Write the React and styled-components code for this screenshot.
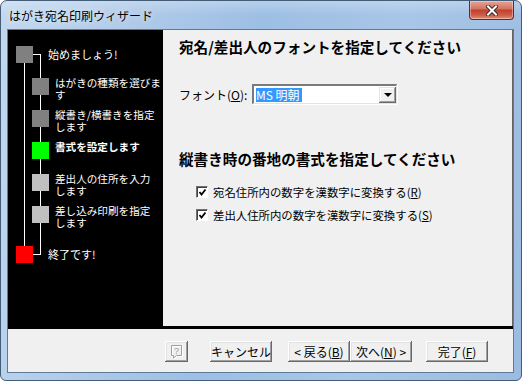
import React from "react";
import styled, { createGlobalStyle } from "styled-components";

const GlobalStyle = createGlobalStyle`
  html, body {
    margin: 0;
    padding: 0;
    background: #ffffff;
    overflow: hidden;
  }
  body {
    font-family: "Noto Sans CJK JP", "Noto Sans", sans-serif;
  }
`;

const steps = [
  { label: ["はがきの種類を選びま", "す"], color: "#808080" },
  { label: ["縦書き/横書きを指定", "します"], color: "#808080" },
  { label: ["書式を設定します"], color: "#00ff00", current: true },
  { label: ["差出人の住所を入力", "します"], color: "#c0c0c0" },
  { label: ["差し込み印刷を指定", "します"], color: "#c0c0c0" },
];

function CloseIcon() {
  return (
    <svg width="12" height="11" viewBox="0 0 12 11">
      <path d="M2 1.5 L10 9.5 M10 1.5 L2 9.5" stroke="#3a2a2a" strokeWidth="4" strokeLinecap="square" />
      <path d="M2 1.5 L10 9.5 M10 1.5 L2 9.5" stroke="#ffffff" strokeWidth="2" strokeLinecap="square" />
    </svg>
  );
}

function HelpIcon() {
  return (
    <svg width="13" height="15" viewBox="0 0 13 15">
      <path d="M1.5 1.5 H11.5 V11.5 H6.5 L3.5 14 V11.5 H1.5 Z" fill="none" stroke="#ffffff" transform="translate(1 1)" />
      <path d="M1.5 1.5 H11.5 V11.5 H6.5 L3.5 14 V11.5 H1.5 Z" fill="none" stroke="#a0a0a0" />
      <text x="6.5" y="10" fontSize="9" textAnchor="middle" fill="#a0a0a0" fontFamily="Liberation Sans, sans-serif">?</text>
    </svg>
  );
}

function CheckMark() {
  return (
    <svg width="9" height="9" viewBox="0 0 9 9">
      <path d="M1.5 4 L3.5 6.5 L7.5 1.5" fill="none" stroke="#000000" strokeWidth="1.8" />
    </svg>
  );
}

function TreeLines() {
  return (
    <Lines width="155" height="296" viewBox="0 0 155 296">
      <rect x="16" y="33" width="1" height="183" fill="#ffffff" />
      <rect x="32" y="24" width="1" height="201" fill="#ffffff" />
      <rect x="25" y="24" width="8" height="1" fill="#ffffff" />
      <rect x="25" y="224" width="8" height="1" fill="#ffffff" />
    </Lines>
  );
}

export default function App() {
  return (
    <>
      <GlobalStyle />
      <Window>
        <TitleBar>
          <Title>はがき宛名印刷ウィザード</Title>
          <CloseButton>
            <CloseIcon />
          </CloseButton>
        </TitleBar>
        <Client>
          <Upper>
            <StepPanel>
              <TreeLines />
              <TopStep>
                <Square $color="#808080" />
                <TopLabel>始めましょう!</TopLabel>
              </TopStep>
              {steps.map((s, i) => (
                <SubStep key={i} $last={i === steps.length - 1}>
                  <Square $color={s.color} />
                  <SubLabel $bold={s.current}>
                    {s.label.map((line, j) => (
                      <div key={j}>{line}</div>
                    ))}
                  </SubLabel>
                </SubStep>
              ))}
              <TopStep>
                <Square $color="#ff0000" />
                <TopLabel>終了です!</TopLabel>
              </TopStep>
            </StepPanel>
            <Content>
              <Heading>宛名/差出人のフォントを指定してください</Heading>
              <FontRow>
                <FieldLabel>
                  フォント(<U>O</U>):
                </FieldLabel>
                <Combo>
                  <ComboText>
                    <Selected>MS 明朝</Selected>
                    <Caret />
                  </ComboText>
                  <DropButton>
                    <Arrow />
                  </DropButton>
                </Combo>
              </FontRow>
              <Heading $top={46}>縦書き時の番地の書式を指定してください</Heading>
              <CheckList>
                <CheckRow>
                  <CheckBox>
                    <CheckMark />
                  </CheckBox>
                  <span>
                    宛名住所内の数字を漢数字に変換する(<U>R</U>)
                  </span>
                </CheckRow>
                <CheckRow>
                  <CheckBox>
                    <CheckMark />
                  </CheckBox>
                  <span>
                    差出人住所内の数字を漢数字に変換する(<U>S</U>)
                  </span>
                </CheckRow>
              </CheckList>
            </Content>
          </Upper>
          <ButtonBar>
            <HelpButton disabled>
              <HelpIcon />
            </HelpButton>
            <Button $gap={22}>キャンセル</Button>
            <Button $gap={16}>
              &lt; 戻る(<U>B</U>)
            </Button>
            <Button $gap={0}>
              次へ(<U>N</U>) &gt;
            </Button>
            <Button $gap={14}>
              完了(<U>F</U>)
            </Button>
          </ButtonBar>
        </Client>
      </Window>
    </>
  );
}

const Window = styled.div`
  box-sizing: border-box;
  width: 522px;
  height: 381px;
  display: flex;
  flex-direction: column;
  border: 1px solid #435d78;
  border-radius: 7px 7px 6px 6px;
  overflow: hidden;
  background:
    linear-gradient(180deg, rgba(255, 255, 255, 0.25) 0px, rgba(255, 255, 255, 0) 14px),
    linear-gradient(100deg, #c3d8ee 0%, #b4cdea 18%, #9dbfe4 45%, #a8c6e7 70%, #9cbbe0 100%);
`;

const TitleBar = styled.div`
  height: 28px;
  display: flex;
  align-items: flex-start;
  justify-content: space-between;
  padding: 0 7px 0 8px;
`;

const Title = styled.div`
  margin-top: 8px;
  font-size: 12px;
  line-height: 14px;
  color: #000000;
  text-shadow: 0 0 6px rgba(255, 255, 255, 0.9);
`;

const CloseButton = styled.div`
  box-sizing: border-box;
  width: 45px;
  height: 19px;
  display: flex;
  align-items: center;
  justify-content: center;
  border: 1px solid #6a2a22;
  border-top: none;
  border-radius: 0 0 4px 4px;
  background: linear-gradient(180deg, #e5a394 0%, #d27565 42%, #c2412c 52%, #cf5f48 80%, #e3907a 100%);
  box-shadow: inset 0 0 0 1px rgba(255, 255, 255, 0.35);
`;

const Client = styled.div`
  flex: 1;
  display: flex;
  flex-direction: column;
  margin: 0 7px 7px 6px;
  border: 1px solid #5d7a99;
  background: #f0f0f0;
`;

const Upper = styled.div`
  height: 296px;
  display: flex;
  border-bottom: 3px solid #000000;
`;

const StepPanel = styled.div`
  position: relative;
  width: 155px;
  flex: none;
  box-sizing: border-box;
  padding: 16px 0 0 8px;
  overflow: hidden;
  background: #000000;
  color: #ffffff;
  font-size: 10.6px;
  white-space: nowrap;
`;

const Lines = styled.svg`
  position: absolute;
  left: 0;
  top: 0;
`;

const TopStep = styled.div`
  position: relative;
  display: flex;
  align-items: center;
  height: 17px;
  margin-bottom: 15px;
`;

const SubStep = styled.div`
  position: relative;
  display: flex;
  align-items: flex-start;
  height: ${(p) => (p.$last ? 40 : 32)}px;
  margin-left: 16px;
`;

const Square = styled.div`
  flex: none;
  width: 17px;
  height: 17px;
  background: ${(p) => p.$color};
`;

const TopLabel = styled.div`
  margin-left: 15px;
  font-size: 11px;
  line-height: 13px;
`;

const SubLabel = styled.div`
  margin: -1px 0 0 6px;
  line-height: 12px;
  font-weight: ${(p) => (p.$bold ? "bold" : "normal")};
`;

const Content = styled.div`
  flex: 1;
  box-sizing: border-box;
  padding: 8px 0 0 16px;
  border-right: 1px solid #646464;
  background: #f0f0f0;
`;

const Heading = styled.h2`
  margin: ${(p) => p.$top || 0}px 0 0;
  font-size: 14.6px;
  line-height: 18px;
  font-weight: bold;
  color: #000000;
`;

const FontRow = styled.div`
  display: flex;
  align-items: center;
  margin-top: 28px;
  height: 20px;
  font-size: 12px;
`;

const FieldLabel = styled.div`
  width: 73px;
`;

const U = styled.span`
  text-decoration: underline;
`;

const Combo = styled.div`
  box-sizing: border-box;
  width: 145px;
  height: 20px;
  display: flex;
  align-items: center;
  justify-content: space-between;
  background: #ffffff;
  border-style: solid;
  border-width: 2px 1px 1px 2px;
  border-color: #7a7a7a #e3e3e3 #e3e3e3 #7a7a7a;
  box-shadow: 1px 1px 0 #ffffff;
`;

const ComboText = styled.div`
  display: flex;
  align-items: center;
  padding-left: 2px;
`;

const Selected = styled.span`
  background: #3399ff;
  color: #ffffff;
  font-size: 12px;
  line-height: 14px;
  padding-right: 1px;
`;

const Caret = styled.span`
  width: 1px;
  height: 14px;
  background: #d0701c;
`;

const DropButton = styled.div`
  box-sizing: border-box;
  width: 17px;
  height: 16px;
  display: flex;
  align-items: center;
  justify-content: center;
  background: #f0f0f0;
  box-shadow: inset -1px -1px #696969, inset 1px 1px #e3e3e3, inset -2px -2px #a0a0a0, inset 2px 2px #ffffff;
`;

const Arrow = styled.div`
  width: 0;
  height: 0;
  border-left: 4px solid transparent;
  border-right: 4px solid transparent;
  border-top: 4px solid #000000;
`;

const CheckList = styled.div`
  display: flex;
  flex-direction: column;
  gap: 9px;
  margin-top: 17px;
  padding-left: 17px;
  font-size: 11.4px;
`;

const CheckRow = styled.div`
  display: flex;
  align-items: center;
  gap: 5px;
  height: 14px;
`;

const CheckBox = styled.div`
  box-sizing: border-box;
  width: 12px;
  height: 12px;
  display: flex;
  align-items: center;
  justify-content: center;
  background: #ffffff;
  border-style: solid;
  border-width: 1px;
  border-color: #707070 #ffffff #ffffff #707070;
  box-shadow: inset 1px 1px #404040;
`;

const ButtonBar = styled.div`
  flex: 1;
  display: flex;
  align-items: flex-start;
  justify-content: flex-end;
  padding: 12px 25px 0 0;
`;

const Button = styled.button`
  box-sizing: border-box;
  width: 62px;
  height: 21px;
  margin-left: ${(p) => p.$gap}px;
  padding: 0;
  border: none;
  background: #f0f0f0;
  box-shadow: inset -1px -1px #696969, inset 1px 1px #ffffff, inset -2px -2px #a0a0a0, inset 2px 2px #e3e3e3;
  font-family: "Noto Sans CJK JP", "Noto Sans", sans-serif;
  font-size: 12px;
  line-height: 21px;
  color: #000000;
`;

const HelpButton = styled(Button)`
  width: 23px;
  display: flex;
  align-items: center;
  justify-content: center;
`;
